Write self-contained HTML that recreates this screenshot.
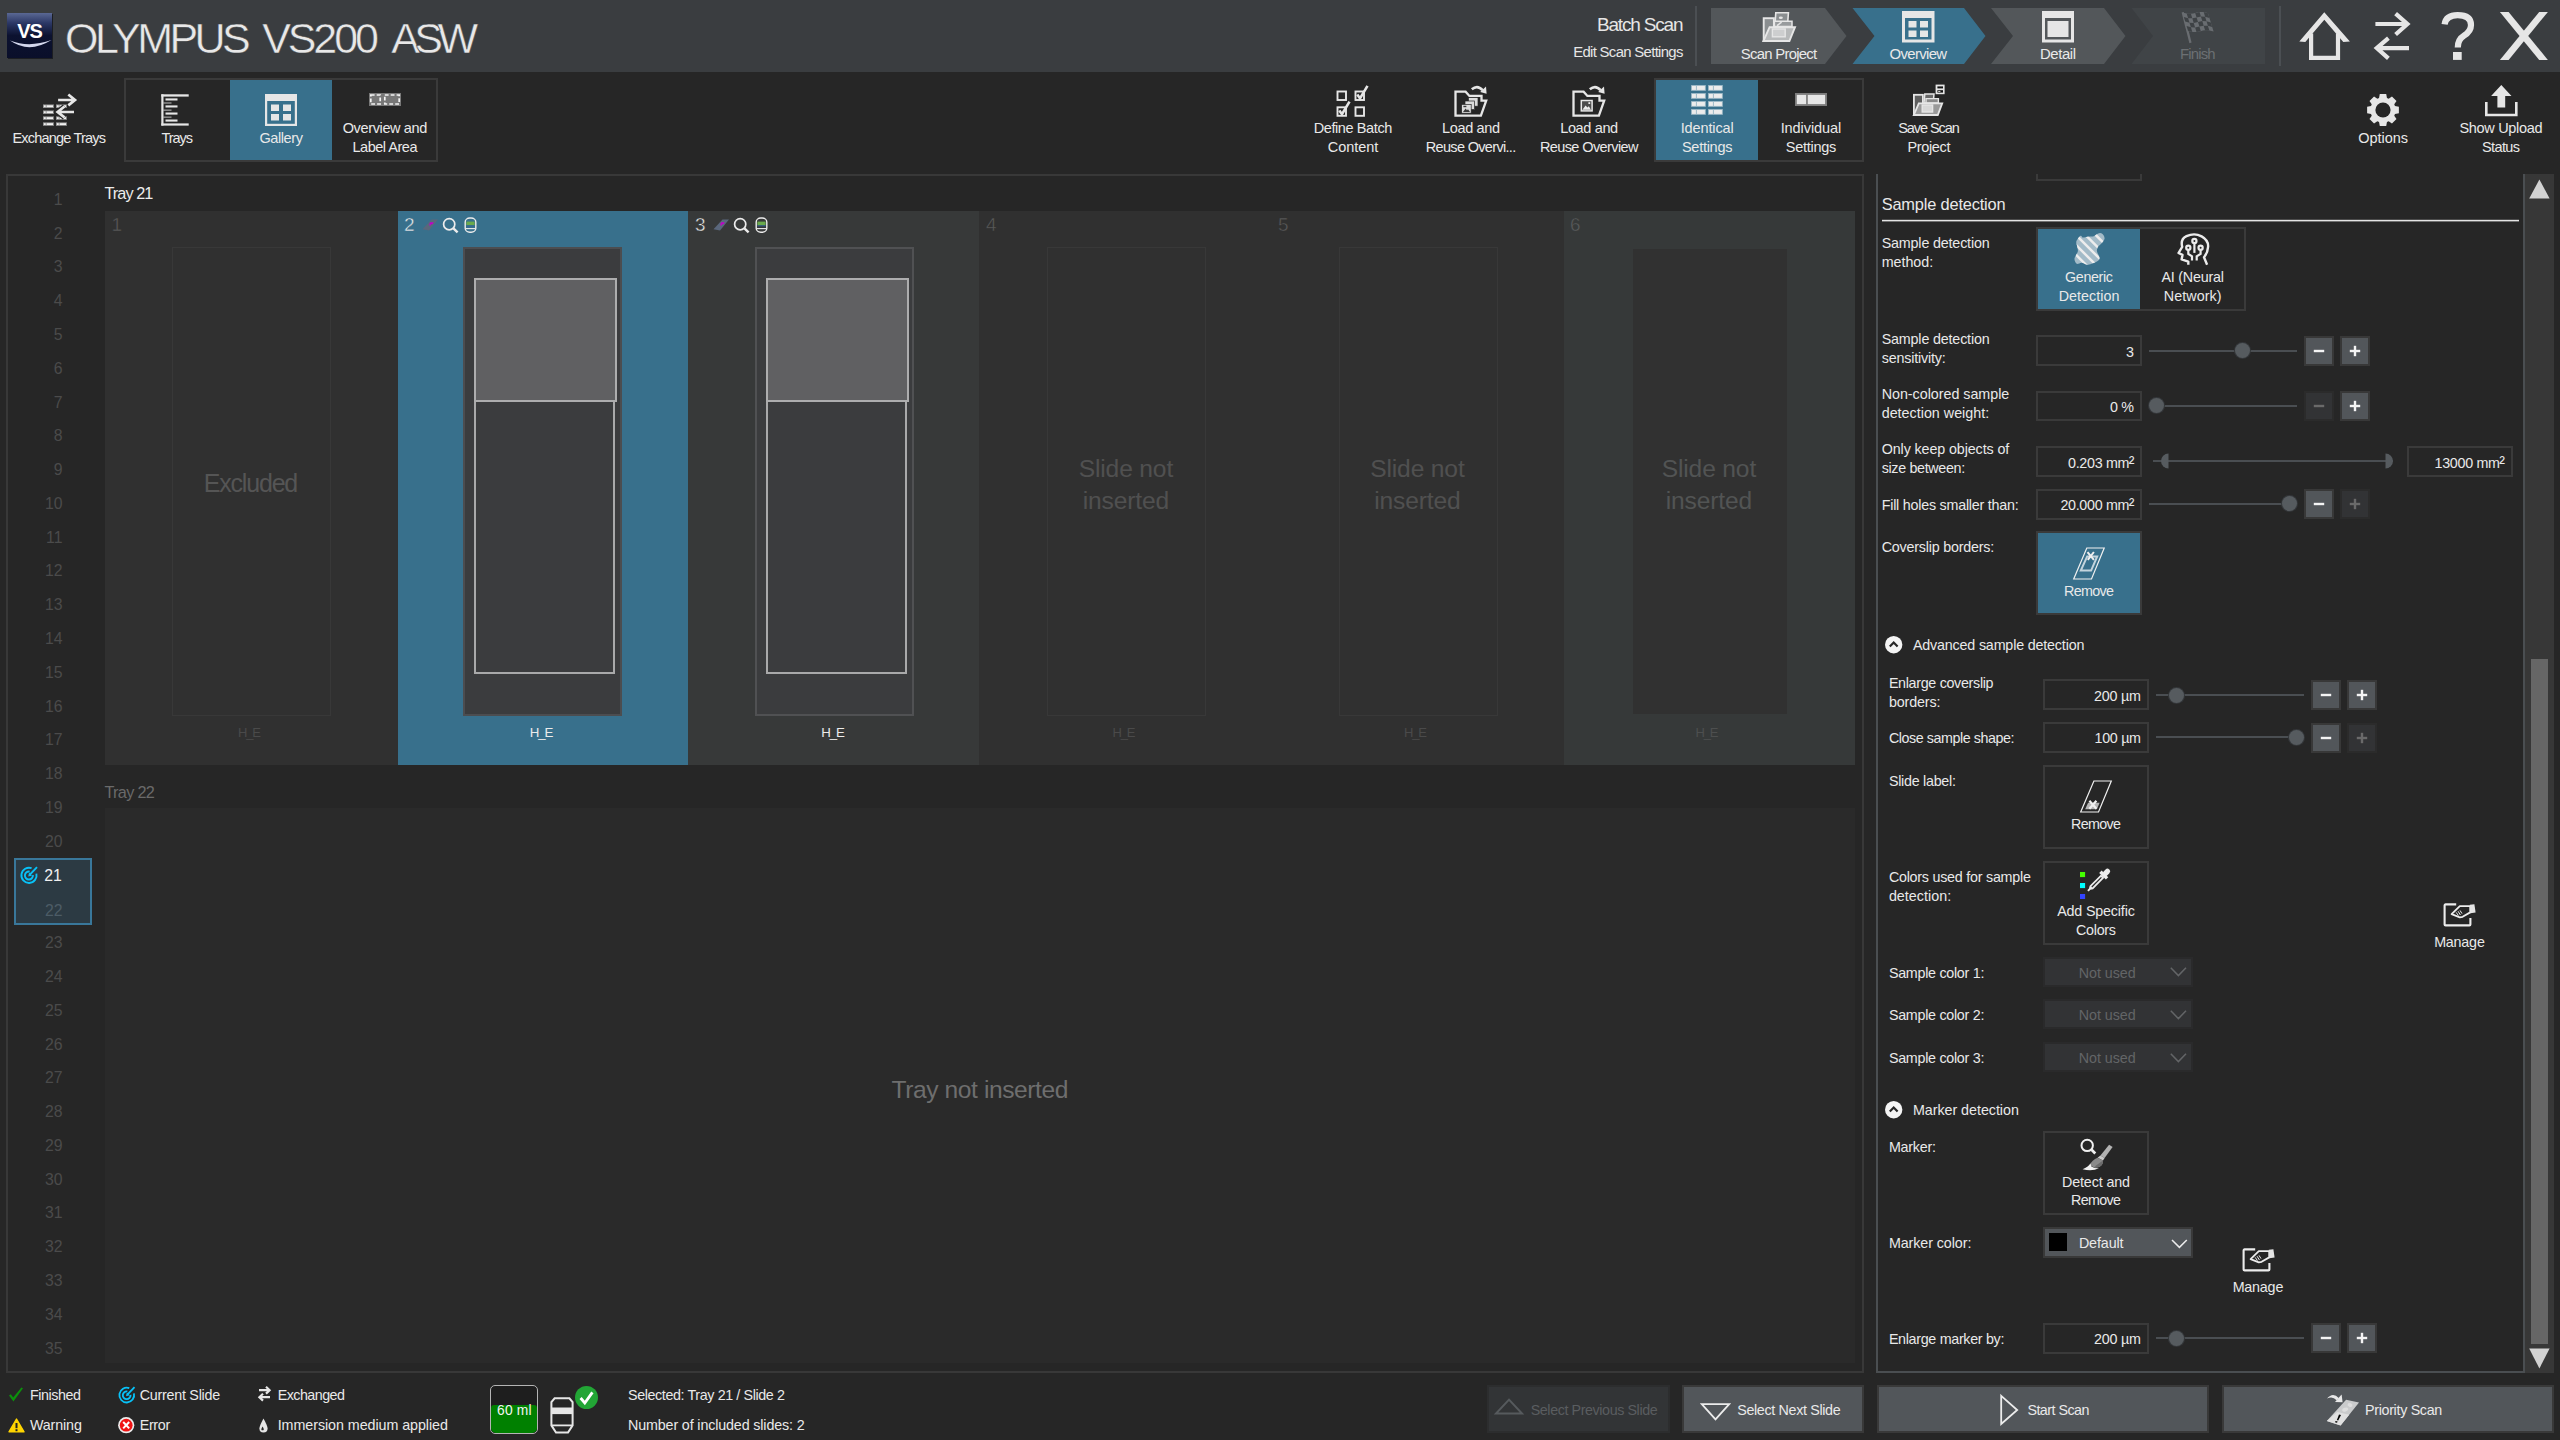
<!DOCTYPE html>
<html lang="en"><head><meta charset="utf-8"><title>OLYMPUS VS200 ASW</title>
<style>
html,body{margin:0;padding:0;}
body{width:2560px;height:1440px;background:#262626;overflow:hidden;position:relative;font-family:"Liberation Sans",sans-serif;}
.a{position:absolute;box-sizing:border-box;}
.t{position:absolute;white-space:nowrap;}
.tl{position:absolute;white-space:nowrap;-webkit-text-stroke:0.45px var(--bg);}
svg{overflow:visible;}
</style></head><body>
<div class="a" style="left:0px;top:0px;width:2560px;height:72px;background:#3a3d40;"></div>
<svg class="a" style="left:7px;top:13px;" width="46" height="46" viewBox="0 0 46 46"><defs><linearGradient id="lg" x1="0" y1="0" x2="0" y2="1"><stop offset="0" stop-color="#5a6894"/><stop offset="0.22" stop-color="#2c3866"/><stop offset="0.5" stop-color="#0c1230"/><stop offset="1" stop-color="#0a0f2a"/></linearGradient></defs>
<rect x="1" y="1" width="45" height="45" fill="#1c1e22"/>
<rect x="0" y="0" width="45" height="45" fill="url(#lg)"/>
<path d="M3 27.5 Q22 41 44.5 27 Q22 35 3 27.5Z" fill="#d4d8ee"/>
<text x="22.5" y="25" text-anchor="middle" font-family="Liberation Sans, sans-serif" font-weight="bold" font-size="20" letter-spacing="-1" fill="#ffffff">VS</text></svg>
<div class="tl" style="left:0;top:10px;width:520px;height:56px;font-size:43px;line-height:56px;color:#e8e8e8;--bg:#3a3d40;"><span style="position:absolute;left:65.05px;letter-spacing:-3.575px">OLYMPUS</span> <span style="position:absolute;left:262.2px;letter-spacing:-3.1px">VS200</span> <span style="position:absolute;left:391.25px;letter-spacing:-5.575px">ASW</span></div>
<div class="t" style="left:1597.00px;top:12.00px;font-size:19px;line-height:25px;color:#e6e6e6;letter-spacing:-1.186px;">Batch Scan</div>
<div class="t" style="left:1573.20px;top:43.00px;font-size:14.9px;line-height:19px;color:#e6e6e6;letter-spacing:-0.674px;">Edit Scan Settings</div>
<div class="a" style="left:1695px;top:6px;width:2px;height:60px;background:#4b4f53;"></div>
<div class="a" style="left:2279px;top:6px;width:2px;height:60px;background:#4b4f53;"></div>
<svg class="a" style="left:1700px;top:0px;" width="580" height="72" viewBox="0 0 580 72">
<polygon points="11,8 125,8 146.5,36 125,64 11,64" fill="#53575a"/>
<polygon points="152.5,8 264,8 285.5,36 264,64 152.5,64 174.5,36" fill="#38708c"/>
<polygon points="291,8 404,8 425.5,36 404,64 291,64 313,36" fill="#53575a"/>
<polygon points="431.5,8 565,8 565,64 431.5,64 453,36" fill="#404447"/>
</svg>
<div class="t" style="left:1740.75px;top:45.00px;font-size:14.9px;line-height:19px;color:#e9e9e9;letter-spacing:-0.725px;">Scan Project</div>
<div class="t" style="left:1889.55px;top:45.00px;font-size:14.9px;line-height:19px;color:#e9e9e9;letter-spacing:-0.657px;">Overview</div>
<div class="t" style="left:2040.00px;top:45.00px;font-size:14.9px;line-height:19px;color:#e9e9e9;letter-spacing:-0.419px;">Detail</div>
<div class="t" style="left:2180.05px;top:45.00px;font-size:14.9px;line-height:19px;color:#6c7073;letter-spacing:-0.849px;">Finish</div>
<svg class="a" style="left:1762px;top:11px;" width="35" height="32" viewBox="0 0 35 32"><rect x="1.7" y="7.2" width="10.2" height="22.6" fill="#8a8e90" stroke="#e6e6e6" stroke-width="1.9"/>
<path d="M13.8 1.8 H26.4 L25.4 16 H12.8Z" fill="#8a8e90" stroke="#e6e6e6" stroke-width="1.6"/><ellipse cx="18.8" cy="6.8" rx="2" ry="1.3" fill="#e6e6e6"/>
<path d="M12.4 10.2 H30 V15.6 H12.4Z" fill="#989b9d" stroke="#e6e6e6" stroke-width="1.5"/><path d="M15 14.6 L19.6 11.2" stroke="#e6e6e6" stroke-width="1.6"/>
<path d="M7.6 16.2 H33 L27.4 30 H1.4Z" fill="#b7b9ba" stroke="#e6e6e6" stroke-width="1.9"/>
<rect x="10.4" y="18" width="12.8" height="7.8" fill="#cdcecf" stroke="#e6e6e6" stroke-width="1.4"/></svg>
<svg class="a" style="left:1901.5px;top:11px;" width="32.5" height="31.5" viewBox="0 0 32.5 31.5"><rect x="0" y="0" width="32.5" height="31.5" fill="#e6e6e6"/><rect x="3" y="7" width="26.5" height="21.5" fill="#38708c"/>
<rect x="6.5" y="10" width="8" height="6.5" fill="#e6e6e6"/><rect x="18" y="10" width="8" height="6.5" fill="#e6e6e6"/><rect x="6.5" y="19.5" width="8" height="6.5" fill="#e6e6e6"/><rect x="18" y="19.5" width="8" height="6.5" fill="#e6e6e6"/></svg>
<svg class="a" style="left:2042px;top:11px;" width="32" height="31.5" viewBox="0 0 32 31.5"><rect x="0" y="0" width="32" height="31.5" fill="#e6e6e6"/><rect x="3" y="7" width="26" height="21.5" fill="#53575a"/><rect x="5.5" y="10" width="21" height="16" fill="#e6e6e6"/></svg>
<svg class="a" style="left:2181px;top:10px;" width="34" height="35" viewBox="0 0 34 35"><path d="M0.6 2.6 L2.8 2 L10.6 32.6 L8.4 33.2Z" fill="#696d71"/><polygon points="1.4,2.4 3.5,3.1 5.7,3.6 7.8,3.8 9.9,3.7 12.1,3.4 14.2,2.9 16.3,2.3 18.5,2.0 20.6,1.9 22.7,2.1 24.9,2.6 27.0,3.3 32.6,21.6 30.5,20.9 28.3,20.4 26.2,20.2 24.1,20.3 21.9,20.6 19.8,21.2 17.7,21.7 15.5,22.0 13.4,22.1 11.3,21.9 9.1,21.4 7.0,20.7" fill="#696d71"/><g fill="#3e4245"><polygon points="2.8,7.0 7.1,8.2 8.5,12.7 4.2,11.6"/><polygon points="5.6,16.1 9.9,17.3 11.3,21.9 7.0,20.7"/><polygon points="5.7,3.6 9.9,3.7 11.3,8.3 7.1,8.2"/><polygon points="8.5,12.7 12.7,12.9 14.1,17.5 9.9,17.3"/><polygon points="11.3,8.3 15.6,7.4 17.0,12.0 12.7,12.9"/><polygon points="14.1,17.5 18.4,16.6 19.8,21.2 15.5,22.0"/><polygon points="14.2,2.9 18.5,2.0 19.9,6.5 15.6,7.4"/><polygon points="17.0,12.0 21.3,11.1 22.7,15.7 18.4,16.6"/><polygon points="19.9,6.5 24.1,6.7 25.5,11.3 21.3,11.1"/><polygon points="22.7,15.7 26.9,15.8 28.3,20.4 24.1,20.3"/><polygon points="22.7,2.1 27.0,3.3 28.4,7.9 24.1,6.7"/><polygon points="25.5,11.3 29.8,12.4 31.2,17.0 26.9,15.8"/></g></svg>
<svg class="a" style="left:2290px;top:0px;" width="70" height="72" viewBox="0 0 70 72"><polygon points="34.3,12.2 59.9,41.6 53.3,42 34.3,19.8 15.3,42 9.3,41.6" fill="#e6e6e6"/><path d="M21.1 33.5 V57.8 H48 V33.5" fill="none" stroke="#e6e6e6" stroke-width="4.2"/></svg>
<svg class="a" style="left:2370px;top:0px;" width="44" height="72" viewBox="0 0 44 72"><g fill="none" stroke="#e6e6e6" stroke-width="4.2"><path d="M5.4 24 H36 M25.6 13.6 L37.4 24 L25.6 34.5"/><path d="M39 48.1 H8 M18.4 38.2 L6.8 48.1 L18.4 58.3"/></g></svg>
<svg class="a" style="left:2440px;top:11px;" width="36" height="49" viewBox="0 0 36 49"><path d="M4.6 13.4 Q6 4.2 17.6 4.2 Q31 4.2 31 14 Q31 20.4 24 24.6 Q17.8 28.4 17.8 36.4" fill="none" stroke="#e6e6e6" stroke-width="6.2"/><rect x="13" y="41" width="8.7" height="7.9" fill="#e6e6e6"/></svg>
<svg class="a" style="left:2499px;top:11px;" width="50" height="50" viewBox="0 0 50 50"><polygon points="0.9,0.9 9.6,0.9 48.9,48.9 40.2,48.9" fill="#e6e6e6"/><polygon points="40.2,0.9 48.9,0.9 9.6,48.9 0.9,48.9" fill="#e6e6e6"/></svg>
<div class="t" style="left:12.45px;top:129.00px;font-size:14.5px;line-height:19px;color:#e9e9e9;letter-spacing:-0.806px;">Exchange Trays</div>
<svg class="a" style="left:42px;top:94px;" width="34" height="33" viewBox="0 0 34 33"><rect x="1" y="10.4" width="10.9" height="3.6" fill="#8c8c8c"/><rect x="1.9" y="11.3" width="1.8" height="1.8" fill="#f0f0f0"/><rect x="4.6" y="11.3" width="6.4" height="1.8" fill="#f0f0f0"/><rect x="14" y="10.4" width="10.9" height="3.6" fill="#8c8c8c"/><rect x="14.9" y="11.3" width="1.8" height="1.8" fill="#f0f0f0"/><rect x="17.6" y="11.3" width="6.4" height="1.8" fill="#f0f0f0"/><rect x="1" y="16.4" width="10.9" height="3.6" fill="#8c8c8c"/><rect x="1.9" y="17.299999999999997" width="1.8" height="1.8" fill="#f0f0f0"/><rect x="4.6" y="17.299999999999997" width="6.4" height="1.8" fill="#f0f0f0"/><rect x="14" y="16.4" width="10.9" height="3.6" fill="#8c8c8c"/><rect x="14.9" y="17.299999999999997" width="1.8" height="1.8" fill="#f0f0f0"/><rect x="17.6" y="17.299999999999997" width="6.4" height="1.8" fill="#f0f0f0"/><rect x="1" y="22.3" width="10.9" height="3.6" fill="#8c8c8c"/><rect x="1.9" y="23.2" width="1.8" height="1.8" fill="#f0f0f0"/><rect x="4.6" y="23.2" width="6.4" height="1.8" fill="#f0f0f0"/><rect x="14" y="22.3" width="10.9" height="3.6" fill="#8c8c8c"/><rect x="14.9" y="23.2" width="1.8" height="1.8" fill="#f0f0f0"/><rect x="17.6" y="23.2" width="6.4" height="1.8" fill="#f0f0f0"/><rect x="1" y="28.3" width="10.9" height="3.6" fill="#8c8c8c"/><rect x="1.9" y="29.2" width="1.8" height="1.8" fill="#f0f0f0"/><rect x="4.6" y="29.2" width="6.4" height="1.8" fill="#f0f0f0"/><rect x="14" y="28.3" width="10.9" height="3.6" fill="#8c8c8c"/><rect x="14.9" y="29.2" width="1.8" height="1.8" fill="#f0f0f0"/><rect x="17.6" y="29.2" width="6.4" height="1.8" fill="#f0f0f0"/>
<g fill="none" stroke="#262626" stroke-width="5.2"><path d="M16.1 6 H32 M26.3 0.5 L33 6 L26.3 11.4"/><path d="M32 18 H16.4 M22.5 12.5 L15.6 18 L22.5 23.4"/></g>
<g fill="none" stroke="#e6e6e6" stroke-width="2.7"><path d="M16.1 6 H32 M26.3 0.5 L33 6 L26.3 11.4"/><path d="M32 18 H16.4 M22.5 12.5 L15.6 18 L22.5 23.4"/></g></svg>
<div class="a" style="left:124px;top:78px;width:314px;height:84px;border:2px solid #3a3a3a;"></div>
<div class="a" style="left:230px;top:80px;width:102px;height:80px;background:#38708c;"></div>
<div class="t" style="left:161.45px;top:129.00px;font-size:14.5px;line-height:19px;color:#e9e9e9;letter-spacing:-1.053px;">Trays</div>
<svg class="a" style="left:160.5px;top:93.5px;" width="28" height="32" viewBox="0 0 28 32"><g fill="#e6e6e6"><rect x="0.3" y="0.3" width="2.2" height="31.3"/><rect x="0.3" y="0.3" width="27.4" height="2.3"/><rect x="0.3" y="29.4" width="27.4" height="2.2"/><rect x="4.5" y="4.4" width="12" height="2.1"/><rect x="2.4" y="8.6" width="8.1" height="0.8"/><rect x="4.5" y="11.4" width="12" height="2.1"/><rect x="2.4" y="15.7" width="8.1" height="0.8"/><rect x="4.5" y="18.5" width="12" height="2.1"/><rect x="2.4" y="22.7" width="8.1" height="0.8"/><rect x="4.5" y="25.5" width="12" height="2.1"/></g></svg>
<div class="t" style="left:259.45px;top:129.00px;font-size:14.5px;line-height:19px;color:#e9e9e9;letter-spacing:-0.405px;">Gallery</div>
<svg class="a" style="left:265px;top:94px;" width="32" height="32" viewBox="0 0 32 32"><rect x="0" y="0" width="32" height="32" fill="#e6e6e6"/><rect x="2.2" y="7" width="27.6" height="22.8" fill="#38708c"/><rect x="6" y="10.5" width="8" height="6.5" fill="#e6e6e6"/><rect x="18" y="10.5" width="8" height="6.5" fill="#e6e6e6"/><rect x="6" y="20" width="8" height="6.5" fill="#e6e6e6"/><rect x="18" y="20" width="8" height="6.5" fill="#e6e6e6"/></svg>
<div class="t" style="left:342.65px;top:119.00px;font-size:14.5px;line-height:19px;color:#e9e9e9;letter-spacing:-0.359px;">Overview and</div>
<div class="t" style="left:352.50px;top:138.00px;font-size:14.5px;line-height:19px;color:#e9e9e9;letter-spacing:-0.482px;">Label Area</div>
<svg class="a" style="left:369px;top:93px;" width="32" height="13" viewBox="0 0 32 13"><rect x="0" y="0" width="32" height="13" fill="#777777"/><rect x="1.8" y="2" width="9.4" height="9" fill="none" stroke="#f4f4f4" stroke-width="1.7" stroke-dasharray="3.8 2.1"/><rect x="15.8" y="2" width="14.4" height="9" fill="none" stroke="#f4f4f4" stroke-width="1.7" stroke-dasharray="3.8 2.1"/></svg>
<div class="t" style="left:1313.65px;top:119.00px;font-size:14.5px;line-height:19px;color:#e9e9e9;letter-spacing:-0.393px;">Define Batch</div>
<div class="t" style="left:1327.75px;top:138.00px;font-size:14.5px;line-height:19px;color:#e9e9e9;letter-spacing:-0.048px;">Content</div>
<svg class="a" style="left:1336px;top:84.5px;" width="34" height="32" viewBox="0 0 34 32"><g fill="none" stroke="#e6e6e6" stroke-width="1.9"><rect x="1.5" y="6.5" width="8.5" height="8.5"/><rect x="19.5" y="6.5" width="8.5" height="8.5" /><rect x="1.5" y="22.3" width="8.5" height="8.5"/><rect x="19.5" y="22.3" width="8.5" height="8.5"/></g>
<g fill="none" stroke="#e6e6e6" stroke-width="2.6"><path d="M21.3 9.6 L24 13.4 L31.5 0.8"/><path d="M3.3 25.4 L6 29.2 L13.5 16.6"/></g></svg>
<div class="t" style="left:1442.00px;top:119.00px;font-size:14.5px;line-height:19px;color:#e9e9e9;letter-spacing:-0.354px;">Load and</div>
<div class="t" style="left:1425.75px;top:138.00px;font-size:14.5px;line-height:19px;color:#e9e9e9;letter-spacing:-0.673px;">Reuse Overvi...</div>
<svg class="a" style="left:1454px;top:85px;" width="35" height="32" viewBox="0 0 35 32"><path d="M1.5 6.7 H11.6 L15.4 10.9 H27.5 V15.7 H32.2 L26.9 30.7 H1.5 Z" fill="none" stroke="#e6e6e6" stroke-width="2.3"/><path d="M17.8 4.2 Q23.6 -0.6 28.6 5.2" fill="none" stroke="#e6e6e6" stroke-width="2.6"/><path d="M26.2 7 L32.6 8.8 L32 1.6Z" fill="#e6e6e6"/>
<g fill="#dcdcdc" stroke="#262626" stroke-width="0.7"><rect x="14.4" y="12.6" width="9.6" height="8.6"/><rect x="11" y="16" width="9.6" height="8.6"/><rect x="7.6" y="19.4" width="9.6" height="8.8"/></g>
<path d="M9 27 L11.6 23.6 L13 25.2 L14 24.2 L16 27Z" fill="#3a3a3a"/><rect x="9.4" y="20.8" width="3" height="1.4" fill="#3a3a3a"/></svg>
<div class="t" style="left:1560.20px;top:119.00px;font-size:14.5px;line-height:19px;color:#e9e9e9;letter-spacing:-0.354px;">Load and</div>
<div class="t" style="left:1539.95px;top:138.00px;font-size:14.5px;line-height:19px;color:#e9e9e9;letter-spacing:-0.606px;">Reuse Overview</div>
<svg class="a" style="left:1572px;top:85px;" width="35" height="32" viewBox="0 0 35 32"><path d="M1.5 6.7 H11.6 L15.4 10.9 H27.5 V15.7 H32.2 L26.9 30.7 H1.5 Z" fill="none" stroke="#e6e6e6" stroke-width="2.3"/><path d="M17.8 4.2 Q23.6 -0.6 28.6 5.2" fill="none" stroke="#e6e6e6" stroke-width="2.6"/><path d="M26.2 7 L32.6 8.8 L32 1.6Z" fill="#e6e6e6"/>
<rect x="9.3" y="15.5" width="10.8" height="10.4" fill="#4c4c4c" stroke="#e8e8e8" stroke-width="1.5"/>
<path d="M10.4 24.8 L13.6 20.4 L15.4 22.6 L16.8 21.2 L19 24.8Z" fill="#ececec"/><rect x="16.4" y="17.2" width="1.8" height="1.8" fill="#ececec"/></svg>
<div class="a" style="left:1654px;top:78px;width:210px;height:84px;border:2px solid #3a3a3a;"></div>
<div class="a" style="left:1656px;top:80px;width:102px;height:80px;background:#38708c;"></div>
<div class="t" style="left:1680.70px;top:119.00px;font-size:14.5px;line-height:19px;color:#e9e9e9;letter-spacing:-0.126px;">Identical</div>
<div class="t" style="left:1681.95px;top:138.00px;font-size:14.5px;line-height:19px;color:#e9e9e9;letter-spacing:-0.270px;">Settings</div>
<svg class="a" style="left:1691px;top:85px;" width="32" height="30" viewBox="0 0 32 30"><rect x="0.1" y="0.1" width="14.7" height="5.7" fill="#a6bfcb"/><rect x="1.0" y="1.0" width="3.9" height="3.9" fill="#ececec"/><rect x="6.0" y="1.0" width="7.9" height="3.9" fill="#ececec"/><rect x="17.1" y="0.1" width="14.7" height="5.7" fill="#a6bfcb"/><rect x="18.0" y="1.0" width="3.9" height="3.9" fill="#ececec"/><rect x="23.0" y="1.0" width="7.9" height="3.9" fill="#ececec"/><rect x="0.1" y="8.1" width="14.7" height="5.7" fill="#a6bfcb"/><rect x="1.0" y="9.0" width="3.9" height="3.9" fill="#ececec"/><rect x="6.0" y="9.0" width="7.9" height="3.9" fill="#ececec"/><rect x="17.1" y="8.1" width="14.7" height="5.7" fill="#a6bfcb"/><rect x="18.0" y="9.0" width="3.9" height="3.9" fill="#ececec"/><rect x="23.0" y="9.0" width="7.9" height="3.9" fill="#ececec"/><rect x="0.1" y="16.1" width="14.7" height="5.7" fill="#a6bfcb"/><rect x="1.0" y="17.0" width="3.9" height="3.9" fill="#ececec"/><rect x="6.0" y="17.0" width="7.9" height="3.9" fill="#ececec"/><rect x="17.1" y="16.1" width="14.7" height="5.7" fill="#a6bfcb"/><rect x="18.0" y="17.0" width="3.9" height="3.9" fill="#ececec"/><rect x="23.0" y="17.0" width="7.9" height="3.9" fill="#ececec"/><rect x="0.1" y="24.1" width="14.7" height="5.7" fill="#a6bfcb"/><rect x="1.0" y="25.0" width="3.9" height="3.9" fill="#ececec"/><rect x="6.0" y="25.0" width="7.9" height="3.9" fill="#ececec"/><rect x="17.1" y="24.1" width="14.7" height="5.7" fill="#a6bfcb"/><rect x="18.0" y="25.0" width="3.9" height="3.9" fill="#ececec"/><rect x="23.0" y="25.0" width="7.9" height="3.9" fill="#ececec"/></svg>
<div class="t" style="left:1780.65px;top:119.00px;font-size:14.5px;line-height:19px;color:#e9e9e9;letter-spacing:-0.063px;">Individual</div>
<div class="t" style="left:1785.75px;top:138.00px;font-size:14.5px;line-height:19px;color:#e9e9e9;letter-spacing:-0.270px;">Settings</div>
<svg class="a" style="left:1795px;top:93px;" width="32" height="13" viewBox="0 0 32 13"><rect x="0" y="0" width="32" height="13" fill="#7c7c7c"/><rect x="1.8" y="1.9" width="9.3" height="9.2" fill="#e6e6e6"/><rect x="12.8" y="1.9" width="17.3" height="9.2" fill="#e6e6e6"/></svg>
<div class="t" style="left:1898.25px;top:119.00px;font-size:14.5px;line-height:19px;color:#e9e9e9;letter-spacing:-1.079px;">Save Scan</div>
<div class="t" style="left:1907.50px;top:138.00px;font-size:14.5px;line-height:19px;color:#e9e9e9;letter-spacing:-0.355px;">Project</div>
<svg class="a" style="left:1912px;top:84px;" width="34" height="33" viewBox="0 0 34 33"><rect x="1.9" y="10.8" width="9" height="20.2" fill="#5e5e5e" stroke="#e6e6e6" stroke-width="1.8"/>
<path d="M12.8 10 H22 L21.2 19 H12Z" fill="#6a6a6a" stroke="#e6e6e6" stroke-width="1.5"/><path d="M14 14.6 H26.4 V19 H14Z" fill="#8a8a8a" stroke="#e6e6e6" stroke-width="1.4"/>
<path d="M6.8 19.4 H30.2 L25.8 31 H1.8Z" fill="#9a9a9a" stroke="#e6e6e6" stroke-width="1.8"/>
<rect x="10.2" y="21" width="10.4" height="7" fill="#d8d8d8" stroke="#e6e6e6" stroke-width="1.4"/>
<rect x="23.6" y="0.6" width="9" height="9.6" fill="#e6e6e6"/><rect x="25.4" y="2.4" width="5.6" height="2" fill="#111"/><rect x="25.4" y="6.2" width="5.6" height="2.4" fill="#111"/><rect x="26.2" y="6.9" width="2.2" height="1" fill="#e6e6e6"/></svg>
<div class="t" style="left:2358.35px;top:129.00px;font-size:14.5px;line-height:19px;color:#e9e9e9;letter-spacing:-0.045px;">Options</div>
<svg class="a" style="left:2367px;top:94px;" width="32" height="32" viewBox="0 0 32 32"><path d="M12.78,0.12 L19.22,0.12 L19.96,4.04 L21.65,4.74 L24.95,2.50 L29.50,7.05 L27.26,10.35 L27.96,12.04 L31.88,12.78 L31.88,19.22 L27.96,19.96 L27.26,21.65 L29.50,24.95 L24.95,29.50 L21.65,27.26 L19.96,27.96 L19.22,31.88 L12.78,31.88 L12.04,27.96 L10.35,27.26 L7.05,29.50 L2.50,24.95 L4.74,21.65 L4.04,19.96 L0.12,19.22 L0.12,12.78 L4.04,12.04 L4.74,10.35 L2.50,7.05 L7.05,2.50 L10.35,4.74 L12.04,4.04Z" fill="#e6e6e6"/><circle cx="16" cy="16" r="7.6" fill="#262626"/></svg>
<div class="t" style="left:2459.50px;top:119.00px;font-size:14.5px;line-height:19px;color:#e9e9e9;letter-spacing:-0.325px;">Show Upload</div>
<div class="t" style="left:2482.00px;top:138.00px;font-size:14.5px;line-height:19px;color:#e9e9e9;letter-spacing:-0.621px;">Status</div>
<svg class="a" style="left:2484.5px;top:84.5px;" width="33" height="32" viewBox="0 0 33 32"><path d="M16.3 0 L26.5 11 H20.2 V22.5 H12.4 V11 H6.1Z" fill="#e6e6e6"/><path d="M1.3 17 V30 H31.3 V17" fill="none" stroke="#e6e6e6" stroke-width="2.6"/></svg>
<div class="a" style="left:6px;top:174px;width:1858px;height:1199px;border:2px solid #383838;"></div>
<div class="t" style="left:53.71px;top:189.00px;font-size:15.8px;line-height:21px;color:#4b4b4b;">1</div>
<div class="t" style="left:53.71px;top:223.00px;font-size:15.8px;line-height:21px;color:#4b4b4b;">2</div>
<div class="t" style="left:53.71px;top:256.00px;font-size:15.8px;line-height:21px;color:#4b4b4b;">3</div>
<div class="t" style="left:53.71px;top:290.00px;font-size:15.8px;line-height:21px;color:#4b4b4b;">4</div>
<div class="t" style="left:53.71px;top:324.00px;font-size:15.8px;line-height:21px;color:#4b4b4b;">5</div>
<div class="t" style="left:53.71px;top:358.00px;font-size:15.8px;line-height:21px;color:#4b4b4b;">6</div>
<div class="t" style="left:53.71px;top:392.00px;font-size:15.8px;line-height:21px;color:#4b4b4b;">7</div>
<div class="t" style="left:53.71px;top:425.00px;font-size:15.8px;line-height:21px;color:#4b4b4b;">8</div>
<div class="t" style="left:53.71px;top:459.00px;font-size:15.8px;line-height:21px;color:#4b4b4b;">9</div>
<div class="t" style="left:44.93px;top:493.00px;font-size:15.8px;line-height:21px;color:#4b4b4b;">10</div>
<div class="t" style="left:46.10px;top:527.00px;font-size:15.8px;line-height:21px;color:#4b4b4b;">11</div>
<div class="t" style="left:44.93px;top:560.00px;font-size:15.8px;line-height:21px;color:#4b4b4b;">12</div>
<div class="t" style="left:44.93px;top:594.00px;font-size:15.8px;line-height:21px;color:#4b4b4b;">13</div>
<div class="t" style="left:44.93px;top:628.00px;font-size:15.8px;line-height:21px;color:#4b4b4b;">14</div>
<div class="t" style="left:44.93px;top:662.00px;font-size:15.8px;line-height:21px;color:#4b4b4b;">15</div>
<div class="t" style="left:44.93px;top:696.00px;font-size:15.8px;line-height:21px;color:#4b4b4b;">16</div>
<div class="t" style="left:44.93px;top:729.00px;font-size:15.8px;line-height:21px;color:#4b4b4b;">17</div>
<div class="t" style="left:44.93px;top:763.00px;font-size:15.8px;line-height:21px;color:#4b4b4b;">18</div>
<div class="t" style="left:44.93px;top:797.00px;font-size:15.8px;line-height:21px;color:#4b4b4b;">19</div>
<div class="t" style="left:44.93px;top:831.00px;font-size:15.8px;line-height:21px;color:#4b4b4b;">20</div>
<div class="t" style="left:44.93px;top:932.00px;font-size:15.8px;line-height:21px;color:#4b4b4b;">23</div>
<div class="t" style="left:44.93px;top:966.00px;font-size:15.8px;line-height:21px;color:#4b4b4b;">24</div>
<div class="t" style="left:44.93px;top:1000.00px;font-size:15.8px;line-height:21px;color:#4b4b4b;">25</div>
<div class="t" style="left:44.93px;top:1034.00px;font-size:15.8px;line-height:21px;color:#4b4b4b;">26</div>
<div class="t" style="left:44.93px;top:1067.00px;font-size:15.8px;line-height:21px;color:#4b4b4b;">27</div>
<div class="t" style="left:44.93px;top:1101.00px;font-size:15.8px;line-height:21px;color:#4b4b4b;">28</div>
<div class="t" style="left:44.93px;top:1135.00px;font-size:15.8px;line-height:21px;color:#4b4b4b;">29</div>
<div class="t" style="left:44.93px;top:1169.00px;font-size:15.8px;line-height:21px;color:#4b4b4b;">30</div>
<div class="t" style="left:44.93px;top:1202.00px;font-size:15.8px;line-height:21px;color:#4b4b4b;">31</div>
<div class="t" style="left:44.93px;top:1236.00px;font-size:15.8px;line-height:21px;color:#4b4b4b;">32</div>
<div class="t" style="left:44.93px;top:1270.00px;font-size:15.8px;line-height:21px;color:#4b4b4b;">33</div>
<div class="t" style="left:44.93px;top:1304.00px;font-size:15.8px;line-height:21px;color:#4b4b4b;">34</div>
<div class="t" style="left:44.93px;top:1338.00px;font-size:15.8px;line-height:21px;color:#4b4b4b;">35</div>
<div class="a" style="left:14px;top:858px;width:78px;height:67px;background:#2c3a43;border:2px solid #39779a;"></div>
<div class="t" style="left:44.33px;top:865.00px;font-size:15.8px;line-height:21px;color:#f0f0f0;">21</div>
<div class="t" style="left:44.93px;top:900.00px;font-size:15.8px;line-height:21px;color:#4c5c66;">22</div>
<svg class="a" style="left:19.8px;top:866px;" width="18" height="18" viewBox="0 0 18 18"><g fill="none" stroke="#08c2f8" stroke-width="1.9"><path d="M11.6 2.2 A7.6 7.6 0 1 0 16.4 7.6"/><path d="M9.6 5.6 A4 4 0 1 0 12.9 9.2"/><path d="M9.4 9.2 L17 1.2"/></g><path d="M8.2 10.6 L9.2 6.6 L12 9.6Z" fill="#08c2f8"/></svg>
<div class="t" style="left:104.40px;top:183.00px;font-size:16.3px;line-height:21px;color:#ececec;letter-spacing:-0.942px;">Tray 21</div>
<div class="a" style="left:105px;top:211px;width:293px;height:554px;background:#303030;"></div>
<div class="a" style="left:398px;top:211px;width:290.4px;height:554px;background:#38708c;"></div>
<div class="a" style="left:688.4px;top:211px;width:291px;height:554px;background:#373939;"></div>
<div class="a" style="left:979.4px;top:211px;width:292.6px;height:554px;background:#303030;"></div>
<div class="a" style="left:1272px;top:211px;width:292px;height:554px;background:#303030;"></div>
<div class="a" style="left:1564px;top:211px;width:290.6px;height:554px;background:#363939;"></div>
<div class="tl" style="left:111.40px;top:212.00px;font-size:19px;line-height:25px;color:#5a5a5a;--bg:#303030;">1</div>
<div class="tl" style="left:403.90px;top:212.00px;font-size:19px;line-height:25px;color:#ececec;--bg:#38708c;">2</div>
<div class="tl" style="left:694.90px;top:212.00px;font-size:19px;line-height:25px;color:#ececec;--bg:#373939;">3</div>
<div class="tl" style="left:985.90px;top:212.00px;font-size:19px;line-height:25px;color:#5a5a5a;--bg:#303030;">4</div>
<div class="tl" style="left:1277.90px;top:212.00px;font-size:19px;line-height:25px;color:#5a5a5a;--bg:#303030;">5</div>
<div class="tl" style="left:1569.90px;top:212.00px;font-size:19px;line-height:25px;color:#5c5e5e;--bg:#363939;">6</div>
<svg class="a" style="left:422px;top:218px;" width="17" height="14" viewBox="0 0 17 14"><polygon points="0.5,11.2 9.5,1.6 16,1.6 7,12.6" fill="#5a677c"/><path d="M8 4.2 h3.6 l-0.8 2 h-1.6 l-0.6 1.4 h-1.4z" fill="#c000c8"/></svg>
<svg class="a" style="left:441.5px;top:217px;" width="17" height="17" viewBox="0 0 17 17"><circle cx="7.2" cy="7.2" r="5.6" fill="none" stroke="#ececec" stroke-width="1.7"/><path d="M11.4 11.4 L15.6 15.4" stroke="#ececec" stroke-width="2.4"/></svg>
<svg class="a" style="left:463.5px;top:216.5px;" width="13" height="16" viewBox="0 0 13 16"><rect x="1.2" y="1" width="10.6" height="14.2" rx="4.6" ry="4" fill="none" stroke="#ececec" stroke-width="1.4"/><rect x="2.4" y="4.6" width="8.2" height="3.8" fill="#6aaa4c"/><rect x="2.4" y="8.4" width="8.2" height="0.9" fill="#2c5f9e"/><path d="M1.6 11.6 H11.4" stroke="#ececec" stroke-width="1.1"/></svg>
<svg class="a" style="left:713px;top:218px;" width="17" height="14" viewBox="0 0 17 14"><polygon points="0.5,11.2 9.5,1.6 16,1.6 7,12.6" fill="#5a677c"/><path d="M8 4.2 h3.6 l-0.8 2 h-1.6 l-0.6 1.4 h-1.4z" fill="#c000c8"/></svg>
<svg class="a" style="left:732.5px;top:217px;" width="17" height="17" viewBox="0 0 17 17"><circle cx="7.2" cy="7.2" r="5.6" fill="none" stroke="#ececec" stroke-width="1.7"/><path d="M11.4 11.4 L15.6 15.4" stroke="#ececec" stroke-width="2.4"/></svg>
<svg class="a" style="left:754.5px;top:216.5px;" width="13" height="16" viewBox="0 0 13 16"><rect x="1.2" y="1" width="10.6" height="14.2" rx="4.6" ry="4" fill="none" stroke="#ececec" stroke-width="1.4"/><rect x="2.4" y="4.6" width="8.2" height="3.8" fill="#6aaa4c"/><rect x="2.4" y="8.4" width="8.2" height="0.9" fill="#2c5f9e"/><path d="M1.6 11.6 H11.4" stroke="#ececec" stroke-width="1.1"/></svg>
<div class="a" style="left:172px;top:247px;width:159px;height:469px;border:1.5px solid #383838;"></div>
<div class="t" style="left:203.75px;top:467.00px;font-size:25px;line-height:32px;color:#555555;letter-spacing:-1.192px;">Excluded</div>
<div class="t" style="left:238.00px;top:724.00px;font-size:13px;line-height:17px;color:#4a4a4a;letter-spacing:-1.145px;">H_E</div>
<div class="a" style="left:463px;top:247px;width:159px;height:469px;background:#3b3c3e;border:2px solid #4c4d50;"></div>
<div class="a" style="left:474px;top:400px;width:140.5px;height:273.5px;border:2px solid #a9a9aa;"></div>
<div class="a" style="left:473.5px;top:277.5px;width:143.5px;height:124px;background:#606062;border:2px solid #adadae;"></div>
<div class="a" style="left:755px;top:247px;width:159px;height:469px;background:#3b3c3e;border:2px solid #505153;"></div>
<div class="a" style="left:766px;top:400px;width:140.5px;height:273.5px;border:2px solid #a9a9aa;"></div>
<div class="a" style="left:765.5px;top:277.5px;width:143.5px;height:124px;background:#606062;border:2px solid #adadae;"></div>
<div class="t" style="left:529.75px;top:724.00px;font-size:13.3px;line-height:17px;color:#ececec;letter-spacing:-1.186px;">H_E</div>
<div class="t" style="left:821.25px;top:724.00px;font-size:13.3px;line-height:17px;color:#ececec;letter-spacing:-1.186px;">H_E</div>
<div class="a" style="left:1047px;top:247px;width:159px;height:469px;border:1.5px solid #383838;"></div>
<div class="t" style="left:1078.75px;top:453.00px;font-size:24.6px;line-height:32px;color:#505050;letter-spacing:-0.154px;">Slide not</div>
<div class="t" style="left:1082.75px;top:485.00px;font-size:24.6px;line-height:32px;color:#505050;letter-spacing:-0.145px;">inserted</div>
<div class="t" style="left:1112.50px;top:724.00px;font-size:13px;line-height:17px;color:#4a4a4a;letter-spacing:-1.145px;">H_E</div>
<div class="a" style="left:1339px;top:247px;width:159px;height:469px;border:1.5px solid #383838;"></div>
<div class="t" style="left:1370.25px;top:453.00px;font-size:24.6px;line-height:32px;color:#505050;letter-spacing:-0.154px;">Slide not</div>
<div class="t" style="left:1374.25px;top:485.00px;font-size:24.6px;line-height:32px;color:#505050;letter-spacing:-0.145px;">inserted</div>
<div class="t" style="left:1404.00px;top:724.00px;font-size:13px;line-height:17px;color:#4a4a4a;letter-spacing:-1.145px;">H_E</div>
<div class="a" style="left:1632.5px;top:249px;width:154.5px;height:465px;background:#313131;"></div>
<div class="t" style="left:1661.75px;top:453.00px;font-size:24.6px;line-height:32px;color:#525454;letter-spacing:-0.154px;">Slide not</div>
<div class="t" style="left:1665.75px;top:485.00px;font-size:24.6px;line-height:32px;color:#525454;letter-spacing:-0.145px;">inserted</div>
<div class="t" style="left:1695.50px;top:724.00px;font-size:13px;line-height:17px;color:#4d4f4f;letter-spacing:-1.145px;">H_E</div>
<div class="t" style="left:104.40px;top:782.00px;font-size:16.3px;line-height:21px;color:#6a6a6a;letter-spacing:-0.692px;">Tray 22</div>
<div class="a" style="left:105px;top:808px;width:1750px;height:555px;background:#2a2a2a;"></div>
<div class="t" style="left:891.50px;top:1074.00px;font-size:24.6px;line-height:32px;color:#6e6e6e;letter-spacing:-0.417px;">Tray not inserted</div>
<svg class="a" style="left:8px;top:1387px;" width="16" height="15" viewBox="0 0 16 15"><path d="M1 8.6 L2.8 7.2 L5.2 10.6 L13.4 0.4 L15 1.2 L5.4 14.4Z" fill="#0c8f0c"/></svg>
<div class="t" style="left:29.90px;top:1386.00px;font-size:14.3px;line-height:19px;color:#e9e9e9;letter-spacing:-0.436px;">Finished</div>
<svg class="a" style="left:7.5px;top:1417.8px;" width="17" height="15" viewBox="0 0 17 15"><path d="M8.5 1 L16 13.8 H1Z" fill="#ffd500" stroke="#ffd500" stroke-width="1.4" stroke-linejoin="round"/><rect x="7.5" y="5" width="2" height="5.2" fill="#222"/><rect x="7.5" y="11.2" width="2" height="2" fill="#222"/></svg>
<div class="t" style="left:29.90px;top:1416.00px;font-size:14.3px;line-height:19px;color:#e9e9e9;letter-spacing:-0.120px;">Warning</div>
<svg class="a" style="left:117.5px;top:1385.6px;" width="17.5" height="17.5" viewBox="0 0 18 18"><g fill="none" stroke="#08c2f8" stroke-width="1.9"><path d="M11.6 2.2 A7.6 7.6 0 1 0 16.4 7.6"/><path d="M9.6 5.6 A4 4 0 1 0 12.9 9.2"/><path d="M9.4 9.2 L17 1.2"/></g><path d="M8.2 10.6 L9.2 6.6 L12 9.6Z" fill="#08c2f8"/></svg>
<div class="t" style="left:139.70px;top:1386.00px;font-size:14.3px;line-height:19px;color:#e9e9e9;letter-spacing:-0.246px;">Current Slide</div>
<svg class="a" style="left:117.8px;top:1417px;" width="17" height="17" viewBox="0 0 17 17"><circle cx="8.2" cy="8.2" r="8.1" fill="#ececec"/><circle cx="8.2" cy="8.2" r="6.4" fill="#f01414"/><path d="M5.2 5 L11.2 11.4 M11.2 5 L5.2 11.4" stroke="#fff" stroke-width="2"/></svg>
<div class="t" style="left:139.70px;top:1416.00px;font-size:14.3px;line-height:19px;color:#e9e9e9;letter-spacing:-0.319px;">Error</div>
<svg class="a" style="left:257.5px;top:1386.2px;" width="13" height="15.5" viewBox="0 0 13 15.5"><g fill="none" stroke="#e6e6e6" stroke-width="2.2"><path d="M1 4.2 H11.5 M8 0.8 L11.6 4.2 L8 7.6"/><path d="M12 11.2 H1.5 M5 7.8 L1.4 11.2 L5 14.6"/></g></svg>
<div class="t" style="left:277.70px;top:1386.00px;font-size:14.3px;line-height:19px;color:#e9e9e9;letter-spacing:-0.532px;">Exchanged</div>
<svg class="a" style="left:259px;top:1418px;" width="9" height="15" viewBox="0 0 9 15"><path d="M4.5 0.5 Q8.6 8 8.6 10.5 A4.1 4.1 0 0 1 0.4 10.5 Q0.4 8 4.5 0.5Z" fill="#e6e6e6"/><path d="M3.6 8.4 Q4.8 10.6 4.8 11.4 A1.3 1.3 0 0 1 2.3 11.4 Q2.3 10.6 3.6 8.4Z" fill="#262626"/></svg>
<div class="t" style="left:277.70px;top:1416.00px;font-size:14.3px;line-height:19px;color:#e9e9e9;letter-spacing:-0.060px;">Immersion medium applied</div>
<div class="a" style="left:490px;top:1385px;width:48px;height:48.5px;background:#1e1e1e;border:1px solid #b4b4b4;border-radius:5px;overflow:hidden;"></div>
<div class="a" style="left:491px;top:1405px;width:46px;height:27.5px;background:#008000;border-radius:3px 3px 5px 5px;"></div>
<div class="t" style="left:497.05px;top:1402.00px;font-size:13.8px;line-height:18px;color:#f4f4f4;letter-spacing:0.189px;">60 ml</div>
<svg class="a" style="left:550px;top:1396.5px;" width="24" height="37" viewBox="0 0 24 37"><path d="M4.6 1.3 H19.4 L22.6 5 V28.4 L18 35.6 H6 L1.4 28.4 V5Z" fill="none" stroke="#e6e6e6" stroke-width="2"/><rect x="1.6" y="10.5" width="20.8" height="6.6" fill="#e6e6e6"/><path d="M1.6 28.4 H22.4" stroke="#e6e6e6" stroke-width="1.8"/></svg>
<svg class="a" style="left:574.5px;top:1385.5px;" width="23" height="23" viewBox="0 0 23 23"><circle cx="11.5" cy="11.5" r="11.5" fill="#22a535"/><path d="M5.6 12 L9.8 17 L17.4 6.4" fill="none" stroke="#fff" stroke-width="2.8"/></svg>
<div class="t" style="left:628.00px;top:1386.00px;font-size:14.3px;line-height:19px;color:#e9e9e9;letter-spacing:-0.382px;">Selected: Tray 21 / Slide 2</div>
<div class="t" style="left:628.00px;top:1416.00px;font-size:14.3px;line-height:19px;color:#e9e9e9;letter-spacing:-0.138px;">Number of included slides: 2</div>
<div class="a" style="left:1487px;top:1385.4px;width:183px;height:48px;background:#323436;border:2px solid #2c2d2e;"></div>
<svg class="a" style="left:1494px;top:1398px;" width="30" height="17" viewBox="0 0 30 17"><path d="M15 1.6 L28 15.6 H2Z" fill="none" stroke="#565a5d" stroke-width="2"/></svg>
<div class="t" style="left:1530.70px;top:1401.00px;font-size:14.3px;line-height:19px;color:#5a5d60;letter-spacing:-0.406px;">Select Previous Slide</div>
<div class="a" style="left:1682px;top:1385.4px;width:182px;height:48px;background:#52565a;border:2px solid #393939;"></div>
<svg class="a" style="left:1699.5px;top:1402.5px;" width="31" height="18" viewBox="0 0 31 18"><path d="M1.8 1.2 H29.2 L15.5 16.4Z" fill="none" stroke="#ececec" stroke-width="1.8"/></svg>
<div class="t" style="left:1737.20px;top:1401.00px;font-size:14.3px;line-height:19px;color:#e9e9e9;letter-spacing:-0.337px;">Select Next Slide</div>
<div class="a" style="left:1876.5px;top:1385.4px;width:332.5px;height:48px;background:#52565a;border:2px solid #393939;"></div>
<svg class="a" style="left:1999.5px;top:1393.5px;" width="19" height="32" viewBox="0 0 19 32"><path d="M1.2 1.8 L17.2 16 L1.2 30Z" fill="none" stroke="#ececec" stroke-width="1.8"/></svg>
<div class="t" style="left:2027.40px;top:1401.00px;font-size:14.3px;line-height:19px;color:#e9e9e9;letter-spacing:-0.530px;">Start Scan</div>
<div class="a" style="left:2221.5px;top:1385.4px;width:332.5px;height:48px;background:#52565a;border:2px solid #393939;"></div>
<svg class="a" style="left:2326px;top:1392.5px;" width="34" height="34" viewBox="0 0 34 34"><polygon points="20.1,6.8 33,9.6 14.6,32.6 0.8,28" fill="#cacbcc"/><polygon points="11.4,18.9 23.2,21.7 14.6,32.6 0.8,28" fill="#e0e0e0"/><ellipse cx="24" cy="12" rx="2.5" ry="1.9" transform="rotate(25 24 12)" fill="#dedede"/><ellipse cx="19.2" cy="16.6" rx="3.1" ry="1.9" transform="rotate(-20 19.2 16.6)" fill="#dedede"/><path d="M13 21.4 L15 22 L12.2 27.4 L10.9 27Z" fill="#000"/><path d="M9.6 28 L11.6 28.6 L11 29.8 L9 29.2Z" fill="#000"/><path d="M1 5.6 Q6.8 -1.6 13 5.2 L10.6 7.2 Q6.4 2.6 1 5.6Z" fill="#e8e8e8"/><path d="M15.6 1.6 L16.6 9.2 L9 8.9Z" fill="#e8e8e8"/></svg>
<div class="t" style="left:2365.00px;top:1401.00px;font-size:14.3px;line-height:19px;color:#e9e9e9;letter-spacing:-0.313px;">Priority Scan</div>
<div class="a" style="left:1876px;top:174px;width:2px;height:1199px;background:#4a4e51;"></div>
<div class="a" style="left:2523px;top:174px;width:2px;height:1199px;background:#4a4e51;"></div>
<div class="a" style="left:1876px;top:1371px;width:649px;height:2px;background:#4a4e51;"></div>
<div class="a" style="left:2036px;top:174px;width:106px;height:6.6px;border:2px solid #3a3a3a;border-top:none;"></div>
<div class="t" style="left:1881.70px;top:194.00px;font-size:16.4px;line-height:21px;color:#e9e9e9;letter-spacing:-0.182px;">Sample detection</div>
<svg class="a" style="left:1882px;top:219px;" width="637" height="3" viewBox="0 0 637 3"><rect x="0" y="0.8" width="637" height="1.6" fill="#e4e4e4"/></svg>
<div class="t" style="left:1881.70px;top:234.00px;font-size:14.3px;line-height:19px;color:#e9e9e9;letter-spacing:-0.166px;">Sample detection</div>
<div class="t" style="left:1881.70px;top:253.00px;font-size:14.3px;line-height:19px;color:#e9e9e9;letter-spacing:-0.028px;">method:</div>
<div class="a" style="left:2036px;top:227px;width:210px;height:84px;border:2px solid #3a3a3a;"></div>
<div class="a" style="left:2038px;top:229px;width:102px;height:80px;background:#38708c;"></div>
<div class="t" style="left:2065.00px;top:268.00px;font-size:14.3px;line-height:19px;color:#e9e9e9;letter-spacing:-0.345px;">Generic</div>
<div class="t" style="left:2058.65px;top:287.00px;font-size:14.3px;line-height:19px;color:#e9e9e9;letter-spacing:0.036px;">Detection</div>
<div class="t" style="left:2161.40px;top:268.00px;font-size:14.3px;line-height:19px;color:#e9e9e9;letter-spacing:-0.197px;">AI (Neural</div>
<div class="t" style="left:2163.85px;top:287.00px;font-size:14.3px;line-height:19px;color:#e9e9e9;letter-spacing:0.070px;">Network)</div>
<svg class="a" style="left:2073.5px;top:233px;" width="31" height="32" viewBox="0 0 31 32"><defs><clipPath id="blobc"><path d="M6.6 2.8 C5.6 3.4 3.0 6.6 2.4 8.3 C1.8 10.0 2.8 11.1 3.0 12.8 C3.2 14.5 4.2 16.5 3.8 18.6 C3.4 20.7 0.7 23.6 0.5 25.6 C0.3 27.6 1.5 30.1 2.7 30.8 C3.9 31.5 5.8 29.6 7.7 29.7 C9.6 29.8 11.5 31.9 14.1 31.7 C16.7 31.5 21.4 29.3 23.3 28.3 C25.2 27.3 25.2 26.5 25.5 25.6 C25.8 24.7 25.3 24.0 24.9 22.8 C24.5 21.6 23.2 20.0 23.0 18.6 C22.8 17.2 22.9 15.7 23.6 14.4 C24.3 13.1 26.2 12.0 27.4 10.6 C28.5 9.2 30.2 7.5 30.5 6.1 C30.8 4.6 30.1 2.9 29.4 1.9 C28.7 0.9 27.3 0.1 26.1 0.0 C24.9 -0.1 23.5 0.8 22.4 1.4 C21.3 1.9 20.8 2.9 19.7 3.3 C18.6 3.7 16.9 3.5 15.5 3.6 C14.1 3.8 12.5 4.1 11.3 4.2 C10.2 4.3 9.4 4.6 8.6 4.4 C7.8 4.2 7.6 2.1 6.6 2.8Z"/></clipPath></defs>
<g clip-path="url(#blobc)"><rect x="-1" y="-1" width="34" height="34" fill="#a3bbc8"/><g stroke="#ededed" stroke-width="2.5"><path d="M-24.8 -5 L20.2 40"/><path d="M-15.0 -5 L30.0 40"/><path d="M-5.0 -5 L40.0 40"/><path d="M4.5 -5 L49.5 40"/><path d="M14.7 -5 L59.7 40"/></g></g></svg>
<svg class="a" style="left:2176.5px;top:232.5px;" width="33" height="33" viewBox="0 0 33 33"><path d="M11.3 31.8 V28.6 L4.6 26.4 L5.5 21.9 L1.5 20 L5.2 13.9 Q3.2 6.2 9.5 3.2 Q17.4 -0.6 24.6 3.4 Q31.6 7.4 31.1 13.8 Q30.8 19.6 27 24.2 L30.1 31.8" fill="none" stroke="#ececec" stroke-width="2.4" stroke-linejoin="round"/>
<g fill="none" stroke="#ececec" stroke-width="2.2"><path d="M17.4 10 V19.9"/><circle cx="17.4" cy="7.9" r="2.1"/><path d="M11.3 16.8 V20.9 L15 23.4 V27.4"/><circle cx="11.3" cy="14.7" r="2.1"/><path d="M23.6 16.8 V20.9 L19.7 23.4 V27.4"/><circle cx="23.6" cy="14.7" r="2.1"/></g></svg>
<div class="t" style="left:1881.70px;top:330.00px;font-size:14.3px;line-height:19px;color:#e9e9e9;letter-spacing:-0.166px;">Sample detection</div>
<div class="t" style="left:1881.70px;top:349.00px;font-size:14.3px;line-height:19px;color:#e9e9e9;letter-spacing:-0.178px;">sensitivity:</div>
<div class="a" style="left:2036px;top:335px;width:106px;height:31px;border:2px solid #3a3a3a;"></div>
<div class="t" style="left:2126.05px;top:343.00px;font-size:14.3px;line-height:19px;color:#e9e9e9;">3</div>
<div class="a" style="left:2149px;top:349.7px;width:148px;height:2px;background:#4a4e52;"></div>
<div class="a" style="left:2234.8px;top:343.2px;width:15px;height:15px;border-radius:50%;background:#565b5f;box-shadow:0 0 0 1px #34373a;"></div>
<div class="a" style="left:2304px;top:336px;width:30px;height:30px;background:#52565a;border:2px solid #383838;"></div>
<svg class="a" style="left:2304px;top:336px;" width="30" height="30" viewBox="0 0 30 30"><rect x="9.8" y="13.8" width="10.4" height="2.4" fill="#f4f4f4"/></svg>
<div class="a" style="left:2340px;top:336px;width:30px;height:30px;background:#52565a;border:2px solid #383838;"></div>
<svg class="a" style="left:2340px;top:336px;" width="30" height="30" viewBox="0 0 30 30"><rect x="9.8" y="13.8" width="10.4" height="2.4" fill="#f4f4f4"/><rect x="13.8" y="9.8" width="2.4" height="10.4" fill="#f4f4f4"/></svg>
<div class="t" style="left:1881.70px;top:385.00px;font-size:14.3px;line-height:19px;color:#e9e9e9;letter-spacing:-0.022px;">Non-colored sample</div>
<div class="t" style="left:1881.70px;top:404.00px;font-size:14.3px;line-height:19px;color:#e9e9e9;letter-spacing:0.011px;">detection weight:</div>
<div class="a" style="left:2036px;top:390.5px;width:106px;height:30.5px;border:2px solid #3a3a3a;"></div>
<div class="t" style="left:2110.00px;top:398.00px;font-size:14.3px;line-height:19px;color:#e9e9e9;letter-spacing:-0.320px;">0 %</div>
<div class="a" style="left:2149px;top:404.7px;width:148px;height:2px;background:#4a4e52;"></div>
<div class="a" style="left:2148.5px;top:398.2px;width:15px;height:15px;border-radius:50%;background:#565b5f;box-shadow:0 0 0 1px #34373a;"></div>
<div class="a" style="left:2304px;top:391px;width:30px;height:30px;background:#323335;border:2px solid #2b2b2b;"></div>
<svg class="a" style="left:2304px;top:391px;" width="30" height="30" viewBox="0 0 30 30"><rect x="9.8" y="13.8" width="10.4" height="2.4" fill="#6a6a6a"/></svg>
<div class="a" style="left:2340px;top:391px;width:30px;height:30px;background:#52565a;border:2px solid #383838;"></div>
<svg class="a" style="left:2340px;top:391px;" width="30" height="30" viewBox="0 0 30 30"><rect x="9.8" y="13.8" width="10.4" height="2.4" fill="#f4f4f4"/><rect x="13.8" y="9.8" width="2.4" height="10.4" fill="#f4f4f4"/></svg>
<div class="t" style="left:1881.70px;top:440.00px;font-size:14.3px;line-height:19px;color:#e9e9e9;letter-spacing:-0.103px;">Only keep objects of</div>
<div class="t" style="left:1881.70px;top:459.00px;font-size:14.3px;line-height:19px;color:#e9e9e9;letter-spacing:-0.328px;">size between:</div>
<div class="a" style="left:2036px;top:446px;width:106px;height:31px;border:2px solid #3a3a3a;"></div>
<div class="t" style="left:2068.00px;top:454.00px;font-size:14.3px;line-height:19px;color:#e9e9e9;letter-spacing:-0.293px;">0.203 mm<span style="font-size:17px;line-height:0;position:relative;top:1px;letter-spacing:0;margin-left:-0.5px">²</span></div>
<div class="a" style="left:2153px;top:460px;width:240px;height:2px;background:#4a4e52;"></div>
<svg class="a" style="left:2158px;top:453px;" width="11" height="16" viewBox="0 0 11 16"><path d="M10.5 0.5 A7.5 7.5 0 0 0 10.5 15.5Z" fill="#565b5f"/></svg>
<svg class="a" style="left:2385px;top:453px;" width="11" height="16" viewBox="0 0 11 16"><path d="M0.5 0.5 A7.5 7.5 0 0 1 0.5 15.5Z" fill="#565b5f"/></svg>
<div class="a" style="left:2406.5px;top:446px;width:106px;height:31px;border:2px solid #3a3a3a;"></div>
<div class="t" style="left:2434.50px;top:454.00px;font-size:14.3px;line-height:19px;color:#e9e9e9;letter-spacing:-0.291px;">13000 mm<span style="font-size:17px;line-height:0;position:relative;top:1px;letter-spacing:0;margin-left:-0.5px">²</span></div>
<div class="t" style="left:1881.70px;top:496.00px;font-size:14.3px;line-height:19px;color:#e9e9e9;letter-spacing:-0.229px;">Fill holes smaller than:</div>
<div class="a" style="left:2036px;top:489px;width:106px;height:30.5px;border:2px solid #3a3a3a;"></div>
<div class="t" style="left:2060.40px;top:496.00px;font-size:14.3px;line-height:19px;color:#e9e9e9;letter-spacing:-0.300px;">20.000 mm<span style="font-size:17px;line-height:0;position:relative;top:1px;letter-spacing:0;margin-left:-0.5px">²</span></div>
<div class="a" style="left:2149px;top:502.7px;width:148px;height:2px;background:#4a4e52;"></div>
<div class="a" style="left:2281.8px;top:496.2px;width:15px;height:15px;border-radius:50%;background:#565b5f;box-shadow:0 0 0 1px #34373a;"></div>
<div class="a" style="left:2304px;top:489px;width:30px;height:30px;background:#52565a;border:2px solid #383838;"></div>
<svg class="a" style="left:2304px;top:489px;" width="30" height="30" viewBox="0 0 30 30"><rect x="9.8" y="13.8" width="10.4" height="2.4" fill="#f4f4f4"/></svg>
<div class="a" style="left:2340px;top:489px;width:30px;height:30px;background:#323335;border:2px solid #2b2b2b;"></div>
<svg class="a" style="left:2340px;top:489px;" width="30" height="30" viewBox="0 0 30 30"><rect x="9.8" y="13.8" width="10.4" height="2.4" fill="#6a6a6a"/><rect x="13.8" y="9.8" width="2.4" height="10.4" fill="#6a6a6a"/></svg>
<div class="t" style="left:1881.70px;top:538.00px;font-size:14.3px;line-height:19px;color:#e9e9e9;letter-spacing:-0.208px;">Coverslip borders:</div>
<div class="a" style="left:2036px;top:531px;width:106px;height:84px;border:2px solid #3a3a3a;"></div>
<div class="a" style="left:2038px;top:533px;width:102px;height:80px;background:#38708c;"></div>
<svg class="a" style="left:2073px;top:546.5px;" width="32" height="33" viewBox="0 0 32 33"><polygon points="13.8,1 31.2,1 18.5,32 0.7,32" fill="none" stroke="#f0f0f0" stroke-width="1.2"/><polygon points="14.2,9.4 24.2,9.4 18.1,23.6 7.8,23.6" fill="none" stroke="#c3d4dd" stroke-width="2"/><path d="M14.5 5.2 L20.9 12.8 M20.9 5 L14.8 12.8" stroke="#f0f0f0" stroke-width="2"/></svg>
<div class="t" style="left:2064.00px;top:582.00px;font-size:14.3px;line-height:19px;color:#e9e9e9;letter-spacing:-0.650px;">Remove</div>
<svg class="a" style="left:1885px;top:636px;" width="17.4" height="17.4" viewBox="0 0 17.4 17.4"><circle cx="8.7" cy="8.7" r="8.7" fill="#f4f4f4"/><path d="M4.8 10.6 L8.7 6.6 L12.6 10.6" fill="none" stroke="#262626" stroke-width="2.2"/></svg>
<div class="t" style="left:1912.90px;top:636.00px;font-size:14.3px;line-height:19px;color:#e9e9e9;letter-spacing:-0.174px;">Advanced sample detection</div>
<div class="t" style="left:1888.90px;top:674.00px;font-size:14.3px;line-height:19px;color:#e9e9e9;letter-spacing:-0.312px;">Enlarge coverslip</div>
<div class="t" style="left:1888.90px;top:693.00px;font-size:14.3px;line-height:19px;color:#e9e9e9;letter-spacing:-0.137px;">borders:</div>
<div class="a" style="left:2043px;top:679px;width:106px;height:31px;border:2px solid #3a3a3a;"></div>
<div class="t" style="left:2094.00px;top:687.00px;font-size:14.3px;line-height:19px;color:#e9e9e9;letter-spacing:-0.197px;">200 µm</div>
<div class="a" style="left:2156px;top:694px;width:148px;height:2px;background:#4a4e52;"></div>
<div class="a" style="left:2168.5px;top:687.5px;width:15px;height:15px;border-radius:50%;background:#565b5f;box-shadow:0 0 0 1px #34373a;"></div>
<div class="a" style="left:2311px;top:680px;width:30px;height:30px;background:#52565a;border:2px solid #383838;"></div>
<svg class="a" style="left:2311px;top:680px;" width="30" height="30" viewBox="0 0 30 30"><rect x="9.8" y="13.8" width="10.4" height="2.4" fill="#f4f4f4"/></svg>
<div class="a" style="left:2347px;top:680px;width:30px;height:30px;background:#52565a;border:2px solid #383838;"></div>
<svg class="a" style="left:2347px;top:680px;" width="30" height="30" viewBox="0 0 30 30"><rect x="9.8" y="13.8" width="10.4" height="2.4" fill="#f4f4f4"/><rect x="13.8" y="9.8" width="2.4" height="10.4" fill="#f4f4f4"/></svg>
<div class="t" style="left:1888.90px;top:729.00px;font-size:14.3px;line-height:19px;color:#e9e9e9;letter-spacing:-0.441px;">Close sample shape:</div>
<div class="a" style="left:2043px;top:722px;width:106px;height:31px;border:2px solid #3a3a3a;"></div>
<div class="t" style="left:2094.50px;top:729.00px;font-size:14.3px;line-height:19px;color:#e9e9e9;letter-spacing:-0.297px;">100 µm</div>
<div class="a" style="left:2156px;top:736.3px;width:148px;height:2px;background:#4a4e52;"></div>
<div class="a" style="left:2288.5px;top:729.8px;width:15px;height:15px;border-radius:50%;background:#565b5f;box-shadow:0 0 0 1px #34373a;"></div>
<div class="a" style="left:2311px;top:723px;width:30px;height:30px;background:#52565a;border:2px solid #383838;"></div>
<svg class="a" style="left:2311px;top:723px;" width="30" height="30" viewBox="0 0 30 30"><rect x="9.8" y="13.8" width="10.4" height="2.4" fill="#f4f4f4"/></svg>
<div class="a" style="left:2347px;top:723px;width:30px;height:30px;background:#323335;border:2px solid #2b2b2b;"></div>
<svg class="a" style="left:2347px;top:723px;" width="30" height="30" viewBox="0 0 30 30"><rect x="9.8" y="13.8" width="10.4" height="2.4" fill="#6a6a6a"/><rect x="13.8" y="9.8" width="2.4" height="10.4" fill="#6a6a6a"/></svg>
<div class="t" style="left:1888.90px;top:772.00px;font-size:14.3px;line-height:19px;color:#e9e9e9;letter-spacing:-0.269px;">Slide label:</div>
<div class="a" style="left:2043px;top:765px;width:106px;height:84px;border:2px solid #3a3a3a;"></div>
<svg class="a" style="left:2080px;top:779.5px;" width="33" height="33" viewBox="0 0 33 33"><polygon points="13.9,1 31.3,1 18.5,32 0.7,32" fill="none" stroke="#f0f0f0" stroke-width="1.2"/><polygon points="8.1,22.8 19.6,22.8 16.9,29.3 5.2,29.3" fill="#b4b4b4"/><path d="M9.4 20.8 L16.4 28.8 M16.4 20.8 L9.4 28.8" stroke="#f0f0f0" stroke-width="2.2"/></svg>
<div class="t" style="left:2071.00px;top:815.00px;font-size:14.3px;line-height:19px;color:#e9e9e9;letter-spacing:-0.650px;">Remove</div>
<div class="t" style="left:1888.90px;top:868.00px;font-size:14.3px;line-height:19px;color:#e9e9e9;letter-spacing:-0.240px;">Colors used for sample</div>
<div class="t" style="left:1888.90px;top:887.00px;font-size:14.3px;line-height:19px;color:#e9e9e9;letter-spacing:0.032px;">detection:</div>
<div class="a" style="left:2043px;top:861px;width:106px;height:84px;border:2px solid #3a3a3a;"></div>
<svg class="a" style="left:2079px;top:867px;" width="34" height="33" viewBox="0 0 34 33"><rect x="1" y="5" width="5.1" height="5.1" fill="#44ff00"/><rect x="1" y="16" width="5.1" height="5.1" fill="#00ffff"/><rect x="1" y="27" width="5.1" height="5" fill="#3344ff"/><g transform="translate(24.8 8) rotate(45)" fill="#ececec"><rect x="-2.7" y="-7.8" width="5.4" height="8" rx="2.6"/><rect x="-4.7" y="-1.6" width="9.4" height="3.4"/><path d="M-2.4 1.6 V17.6 L-1 20 V22.4 H1 V20 L2.4 17.6 V1.6Z"/><rect x="-0.6" y="3.4" width="1.2" height="13.6" fill="#262626"/></g></svg>
<div class="t" style="left:2057.15px;top:902.00px;font-size:14.3px;line-height:19px;color:#e9e9e9;letter-spacing:-0.163px;">Add Specific</div>
<div class="t" style="left:2076.00px;top:921.00px;font-size:14.3px;line-height:19px;color:#e9e9e9;letter-spacing:-0.264px;">Colors</div>
<svg class="a" style="left:2442.5px;top:902.5px;" width="33" height="24" viewBox="0 0 33 24"><path d="M13.2 1.4 H2.6 Q1.6 1.4 1.6 2.4 V21.4 Q1.6 22.4 2.6 22.4 H26.4 Q27.4 22.4 27.4 21.4 V14.9" fill="none" stroke="#ececec" stroke-width="2.1"/><path d="M8.6 11.2 L16.8 3.2 H27.2 V9.4 L19.6 13.8 L16.8 14.4Z" fill="#262626" stroke="#ececec" stroke-width="1.8" stroke-linejoin="round"/><path d="M26.8 1.8 L31.4 1.2 L32.6 9.4 L27.4 10.2Z" fill="#e4e4e4"/><path d="M13.2 9.4 L15.4 12.6 M15 8.2 L17.4 12 M17 7.4 L19 10.6" stroke="#ececec" stroke-width="1"/></svg>
<div class="t" style="left:2434.15px;top:933.00px;font-size:14.3px;line-height:19px;color:#e9e9e9;letter-spacing:-0.195px;">Manage</div>
<div class="t" style="left:1888.90px;top:964.00px;font-size:14.3px;line-height:19px;color:#e9e9e9;letter-spacing:-0.275px;">Sample color 1:</div>
<div class="a" style="left:2043px;top:957px;width:150px;height:30px;background:#323335;border:2px solid #2a2a2b;"></div>
<div class="t" style="left:2078.70px;top:964.00px;font-size:14.3px;line-height:19px;color:#636567;letter-spacing:-0.034px;">Not used</div>
<svg class="a" style="left:2170px;top:967.4px;" width="17" height="10" viewBox="0 0 17 10"><path d="M0.8 0.8 L8.4 8.6 L16 0.8" fill="none" stroke="#636567" stroke-width="1.5"/></svg>
<div class="t" style="left:1888.90px;top:1006.00px;font-size:14.3px;line-height:19px;color:#e9e9e9;letter-spacing:-0.275px;">Sample color 2:</div>
<div class="a" style="left:2043px;top:999.4px;width:150px;height:30px;background:#323335;border:2px solid #2a2a2b;"></div>
<div class="t" style="left:2078.70px;top:1006.00px;font-size:14.3px;line-height:19px;color:#636567;letter-spacing:-0.034px;">Not used</div>
<svg class="a" style="left:2170px;top:1009.8px;" width="17" height="10" viewBox="0 0 17 10"><path d="M0.8 0.8 L8.4 8.6 L16 0.8" fill="none" stroke="#636567" stroke-width="1.5"/></svg>
<div class="t" style="left:1888.90px;top:1049.00px;font-size:14.3px;line-height:19px;color:#e9e9e9;letter-spacing:-0.275px;">Sample color 3:</div>
<div class="a" style="left:2043px;top:1042.2px;width:150px;height:30px;background:#323335;border:2px solid #2a2a2b;"></div>
<div class="t" style="left:2078.70px;top:1049.00px;font-size:14.3px;line-height:19px;color:#636567;letter-spacing:-0.034px;">Not used</div>
<svg class="a" style="left:2170px;top:1052.6px;" width="17" height="10" viewBox="0 0 17 10"><path d="M0.8 0.8 L8.4 8.6 L16 0.8" fill="none" stroke="#636567" stroke-width="1.5"/></svg>
<svg class="a" style="left:1885px;top:1100.5px;" width="17.4" height="17.4" viewBox="0 0 17.4 17.4"><circle cx="8.7" cy="8.7" r="8.7" fill="#f4f4f4"/><path d="M4.8 10.6 L8.7 6.6 L12.6 10.6" fill="none" stroke="#262626" stroke-width="2.2"/></svg>
<div class="t" style="left:1912.90px;top:1101.00px;font-size:14.3px;line-height:19px;color:#e9e9e9;letter-spacing:-0.034px;">Marker detection</div>
<div class="t" style="left:1888.90px;top:1138.00px;font-size:14.3px;line-height:19px;color:#e9e9e9;letter-spacing:-0.244px;">Marker:</div>
<div class="a" style="left:2043px;top:1131px;width:106px;height:84px;border:2px solid #3a3a3a;"></div>
<svg class="a" style="left:2079.5px;top:1137.5px;" width="33" height="33" viewBox="0 0 33 33"><circle cx="7.2" cy="7.4" r="5.7" fill="none" stroke="#f0f0f0" stroke-width="2"/><path d="M11.6 11.8 L15.3 15.5" stroke="#f0f0f0" stroke-width="2.7"/><polygon points="29.1,6.7 32.6,9.1 24.6,20 20.4,17.6" fill="#b2b2b2"/><polygon points="20.4,17.6 24.6,20 23,22.4 17.6,19.8" fill="#cbcbcb"/><path d="M17.6 19.8 Q12 22 9.6 27 L14 29.6 Q20.4 30 22.6 25.4 L23 22.4Z" fill="#8a8a8a"/><path d="M23 22.4 L14.6 28.6 Q20 30.6 22.6 25.8Z" fill="#6c6c6c"/><path d="M2.6 31.2 Q8 29.2 10.4 25.6 L11.4 28.4 Q15 30.6 19 30.2 Q12 33.6 2.6 31.2Z" fill="#f2f2f2"/></svg>
<div class="t" style="left:2062.00px;top:1173.00px;font-size:14.3px;line-height:19px;color:#e9e9e9;letter-spacing:-0.129px;">Detect and</div>
<div class="t" style="left:2071.00px;top:1191.00px;font-size:14.3px;line-height:19px;color:#e9e9e9;letter-spacing:-0.650px;">Remove</div>
<div class="t" style="left:1888.90px;top:1234.00px;font-size:14.3px;line-height:19px;color:#e9e9e9;letter-spacing:-0.078px;">Marker color:</div>
<div class="a" style="left:2043px;top:1227px;width:150px;height:31px;background:#52565a;border:2px solid #393939;"></div>
<div class="a" style="left:2048.7px;top:1233px;width:18.3px;height:18px;background:#000;"></div>
<div class="t" style="left:2078.90px;top:1234.00px;font-size:14.3px;line-height:19px;color:#e9e9e9;letter-spacing:-0.102px;">Default</div>
<svg class="a" style="left:2170.5px;top:1239px;" width="17" height="10" viewBox="0 0 17 10"><path d="M1 1 L8.4 8.4 L15.8 1" fill="none" stroke="#ececec" stroke-width="1.5"/></svg>
<svg class="a" style="left:2241.5px;top:1247.5px;" width="33" height="24" viewBox="0 0 33 24"><path d="M13.2 1.4 H2.6 Q1.6 1.4 1.6 2.4 V21.4 Q1.6 22.4 2.6 22.4 H26.4 Q27.4 22.4 27.4 21.4 V14.9" fill="none" stroke="#ececec" stroke-width="2.1"/><path d="M8.6 11.2 L16.8 3.2 H27.2 V9.4 L19.6 13.8 L16.8 14.4Z" fill="#262626" stroke="#ececec" stroke-width="1.8" stroke-linejoin="round"/><path d="M26.8 1.8 L31.4 1.2 L32.6 9.4 L27.4 10.2Z" fill="#e4e4e4"/><path d="M13.2 9.4 L15.4 12.6 M15 8.2 L17.4 12 M17 7.4 L19 10.6" stroke="#ececec" stroke-width="1"/></svg>
<div class="t" style="left:2232.65px;top:1278.00px;font-size:14.3px;line-height:19px;color:#e9e9e9;letter-spacing:-0.195px;">Manage</div>
<div class="t" style="left:1888.90px;top:1330.00px;font-size:14.3px;line-height:19px;color:#e9e9e9;letter-spacing:-0.312px;">Enlarge marker by:</div>
<div class="a" style="left:2043px;top:1323px;width:106px;height:31px;border:2px solid #3a3a3a;"></div>
<div class="t" style="left:2094.00px;top:1330.00px;font-size:14.3px;line-height:19px;color:#e9e9e9;letter-spacing:-0.197px;">200 µm</div>
<div class="a" style="left:2156px;top:1337px;width:148px;height:2px;background:#4a4e52;"></div>
<div class="a" style="left:2168.9px;top:1330.5px;width:15px;height:15px;border-radius:50%;background:#565b5f;box-shadow:0 0 0 1px #34373a;"></div>
<div class="a" style="left:2311px;top:1323px;width:30px;height:30px;background:#52565a;border:2px solid #383838;"></div>
<svg class="a" style="left:2311px;top:1323px;" width="30" height="30" viewBox="0 0 30 30"><rect x="9.8" y="13.8" width="10.4" height="2.4" fill="#f4f4f4"/></svg>
<div class="a" style="left:2347px;top:1323px;width:30px;height:30px;background:#52565a;border:2px solid #383838;"></div>
<svg class="a" style="left:2347px;top:1323px;" width="30" height="30" viewBox="0 0 30 30"><rect x="9.8" y="13.8" width="10.4" height="2.4" fill="#f4f4f4"/><rect x="13.8" y="9.8" width="2.4" height="10.4" fill="#f4f4f4"/></svg>
<div class="a" style="left:2525px;top:174px;width:29px;height:1199px;background:#373737;"></div>
<div class="a" style="left:2531px;top:659px;width:17px;height:685px;background:#666666;"></div>
<svg class="a" style="left:2529px;top:179px;" width="21" height="20" viewBox="0 0 21 20"><path d="M10.4 0.5 L20.6 19.5 H0.2Z" fill="#d2d2d2"/></svg>
<svg class="a" style="left:2529px;top:1348px;" width="21" height="21" viewBox="0 0 21 21"><path d="M0.2 0.5 H20.6 L10.4 20.5Z" fill="#d2d2d2"/></svg>
</body></html>
